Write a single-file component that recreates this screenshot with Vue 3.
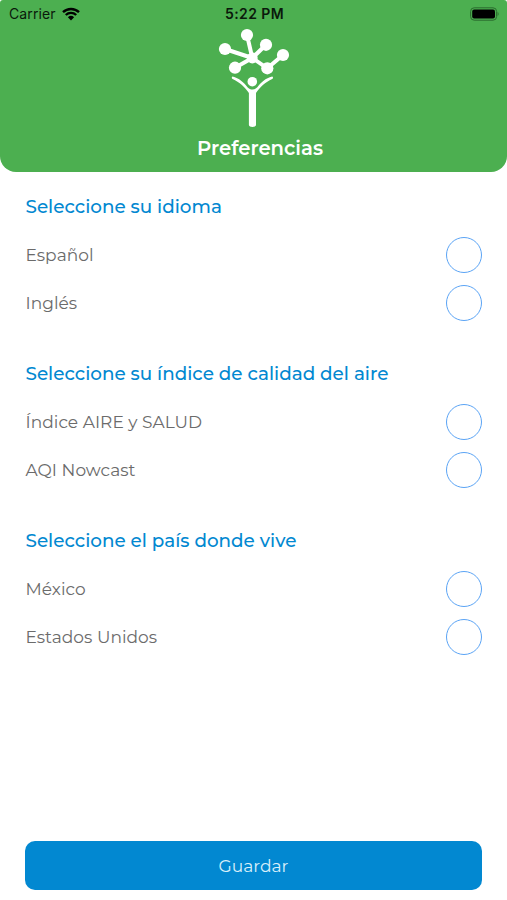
<template>
  <div class="screen">
    <header class="header">
      <div class="status-bar">
        <div class="carrier">
          <span>Carrier</span>
          <svg class="wifi" viewBox="0 0 18 14">
            <path d="M1 5.2 A11.5 11.5 0 0 1 17 5.2" />
            <path d="M3.8 8 A7.5 7.5 0 0 1 14.2 8" />
            <path class="wifi-dot" d="M9 13.4 L5.9 10.3 A4.5 4.5 0 0 1 12.1 10.3 Z" />
          </svg>
        </div>
        <span class="time">5:22 PM</span>
        <div class="battery">
          <svg viewBox="0 0 30 14">
            <rect class="battery-case" x="0.6" y="0.8" width="26" height="12.4" rx="3.6" />
            <rect x="2.2" y="2.4" width="22.8" height="9.2" rx="2" />
            <path class="battery-tip" d="M27.6 4.8 Q29.6 7 27.6 9.2 Z" />
          </svg>
        </div>
      </div>
      <svg class="logo" viewBox="0 0 80 106">
        <path
          class="branches"
          d="M40.3 34 L35 11 M40.3 34 L13 25 M40.3 34 L54 20.7 M40.3 34 L23 43.7 M40.3 34 L55.3 44.3 L71 31"
        />
        <circle cx="35" cy="11" r="6.1" />
        <circle cx="13" cy="25" r="6.1" />
        <circle cx="54" cy="20.8" r="6.1" />
        <circle cx="71" cy="31" r="6.1" />
        <circle cx="55.3" cy="44.3" r="6.1" />
        <circle cx="23" cy="43.7" r="6.1" />
        <circle cx="40.3" cy="34" r="5.4" />
        <circle cx="40.3" cy="57.7" r="4.8" />
        <path
          d="M20.6 52.6 C27 54 32 59 35.5 63.2 C38.3 66.3 42.7 66.3 45.3 63.2 C49 59 53.5 54 60.2 52.6 C61.4 53 61.2 54.5 60.2 55 C53.5 58 47.5 63.5 44 69 L44 101 C44 103.5 36.9 103.5 36.9 101 L36.9 69 C33.4 63.5 27.3 58 20.6 55 C19.6 54.5 19.4 53 20.6 52.6 Z"
        />
      </svg>
      <h1>Preferencias</h1>
    </header>

    <main class="content">
      <section v-for="group in groups" :key="group.key" class="group">
        <h2>{{ group.title }}</h2>
        <div
          v-for="option in group.options"
          :key="option"
          class="option"
          @click="selected[group.key] = option"
        >
          <span>{{ option }}</span>
          <span class="radio" :class="{ checked: selected[group.key] === option }"></span>
        </div>
      </section>
    </main>

    <footer class="footer">
      <button type="button">Guardar</button>
    </footer>
  </div>
</template>

<script setup>
import { ref } from 'vue';

const groups = [
  {
    key: 'language',
    title: 'Seleccione su idioma',
    options: ['Español', 'Inglés']
  },
  {
    key: 'index',
    title: 'Seleccione su índice de calidad del aire',
    options: ['Índice AIRE y SALUD', 'AQI Nowcast']
  },
  {
    key: 'country',
    title: 'Seleccione el país donde vive',
    options: ['México', 'Estados Unidos']
  }
];

const selected = ref({
  language: null,
  index: null,
  country: null
});
</script>

<style>
body {
  margin: 0;
  background: #fff;
}
</style>

<style scoped>
.screen {
  display: flex;
  flex-direction: column;
  height: 900px;
  box-sizing: border-box;
  font-family: Montserrat, Inter, "Open Sans", sans-serif;
  color: #6b6b6b;
}

.header {
  display: flex;
  flex-direction: column;
  align-items: center;
  height: 172px;
  border-radius: 3px 3px 16px 16px;
  background: #4caf50;
  color: #fff;
}

.status-bar {
  display: grid;
  grid-template-columns: 1fr auto 1fr;
  align-items: center;
  align-self: stretch;
  height: 24px;
  padding: 3px 7px 0 9px;
  box-sizing: border-box;
  font-family: Inter, "Liberation Sans", sans-serif;
  font-size: 14px;
  color: #0a190b;
}

.carrier {
  display: flex;
  align-items: center;
  gap: 6px;
  letter-spacing: 0.1px;
}

.wifi {
  width: 18px;
  height: 14px;
  fill: none;
  stroke: #000;
  stroke-width: 2.4;
}

.wifi .wifi-dot {
  fill: #000;
  stroke: none;
}

.time {
  font-weight: 600;
  letter-spacing: 0.4px;
}

.battery {
  display: flex;
  justify-content: flex-end;
}

.battery svg {
  width: 30px;
  height: 14px;
}

.battery-case {
  fill: none;
  stroke: #2b6b2e;
  stroke-width: 1;
}

.battery-tip {
  fill: #2b6b2e;
}

.logo {
  width: 80px;
  height: 106px;
  margin-right: 3px;
  fill: #fff;
}

.branches {
  fill: none;
  stroke: #fff;
  stroke-width: 4;
}

h1 {
  margin: 5px 0 0;
  padding-left: 13px;
  font-size: 19.6px;
  font-weight: 600;
  line-height: 26px;
}

.content {
  display: flex;
  flex-direction: column;
  flex: 1;
  gap: 23px;
  padding: 11px 25px 0;
}

h2 {
  margin: 0;
  padding-left: 0.5px;
  font-size: 18.35px;
  font-weight: 500;
  line-height: 48px;
  color: #0288d1;
}

.option {
  display: flex;
  align-items: center;
  justify-content: space-between;
  height: 48px;
  padding-left: 0.5px;
  font-size: 17px;
  letter-spacing: 0.04px;
  cursor: pointer;
}

.radio {
  width: 36px;
  height: 36px;
  box-sizing: border-box;
  border: 1.5px solid #5ba4f5;
  border-radius: 50%;
}

.radio.checked {
  background: #0288d1;
}

.footer {
  padding: 0 25px 10px;
}

button {
  display: block;
  width: 100%;
  height: 49px;
  border: none;
  border-radius: 10px;
  background: #0288d1;
  font-family: inherit;
  font-size: 17.1px;
  color: #d9effa;
}
</style>
